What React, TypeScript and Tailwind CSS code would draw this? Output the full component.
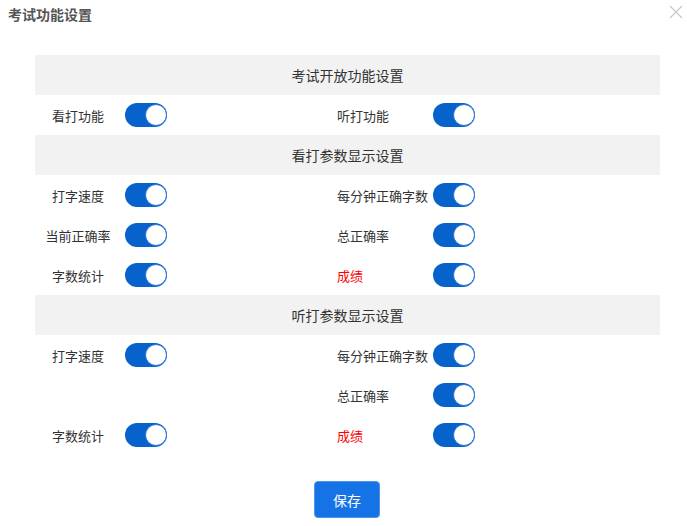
import React from "react";

const Toggle = () => (
  <div className="relative w-[42px] h-6 rounded-full bg-[#0862cc] shrink-0">
    <div className="absolute right-0 top-[1px] w-[22px] h-[22px] rounded-full bg-white border border-[#2a74d4]" />
  </div>
);

type Item = { label: string; red?: boolean } | null;

const Row = ({ left, right }: { left: Item; right: Item }) => (
  <div className="h-10 flex items-center">
    <div className="w-[302px] flex items-center">
      {left && (
        <>
          <div className={`w-[86px] text-center text-[13px] leading-none ${left.red ? "text-[#ff0000]" : "text-[#333]"}`}>{left.label}</div>
          <div className="ml-[4px]"><Toggle /></div>
        </>
      )}
    </div>
    {right && (
      <div className="flex items-center">
        <div className={`w-[96px] text-left text-[13px] leading-none ${right.red ? "text-[#ff0000]" : "text-[#333]"}`}>{right.label}</div>
        <Toggle />
      </div>
    )}
  </div>
);

const Header = ({ title }: { title: string }) => (
  <div className="h-10 bg-[#f2f2f2] flex items-center justify-center text-[14px] text-[#333] leading-none">{title}</div>
);

export default function App() {
  return (
    <div className="w-[687px] h-[526px] bg-white relative" style={{ fontFamily: '"Noto Sans CJK SC", "Noto Sans", sans-serif' }}>
      <div className="h-[55px] relative">
        <div className="absolute left-[8px] top-[6px] text-[14px] font-bold text-[#555] leading-[16px]">考试功能设置</div>
        <svg className="absolute right-[4px] top-[5px]" width="14" height="14" viewBox="0 0 14 14">
          <path d="M1 1 L13 13 M13 1 L1 13" stroke="#c8c8c8" strokeWidth="1.2" />
        </svg>
      </div>
      <div className="mx-[35px] w-[625px]">
        <Header title="考试开放功能设置" />
        <Row left={{ label: "看打功能" }} right={{ label: "听打功能" }} />
        <Header title="看打参数显示设置" />
        <Row left={{ label: "打字速度" }} right={{ label: "每分钟正确字数" }} />
        <Row left={{ label: "当前正确率" }} right={{ label: "总正确率" }} />
        <Row left={{ label: "字数统计" }} right={{ label: "成绩", red: true }} />
        <Header title="听打参数显示设置" />
        <Row left={{ label: "打字速度" }} right={{ label: "每分钟正确字数" }} />
        <Row left={null} right={{ label: "总正确率" }} />
        <Row left={{ label: "字数统计" }} right={{ label: "成绩", red: true }} />
      </div>
      <div className="flex justify-center pt-[26px]">
        <button className="ml-[7px] w-[66px] h-[37px] rounded-[4px] bg-[#1673e6] border border-[#4d95ee] text-white text-[14px] leading-none">保存</button>
      </div>
    </div>
  );
}
